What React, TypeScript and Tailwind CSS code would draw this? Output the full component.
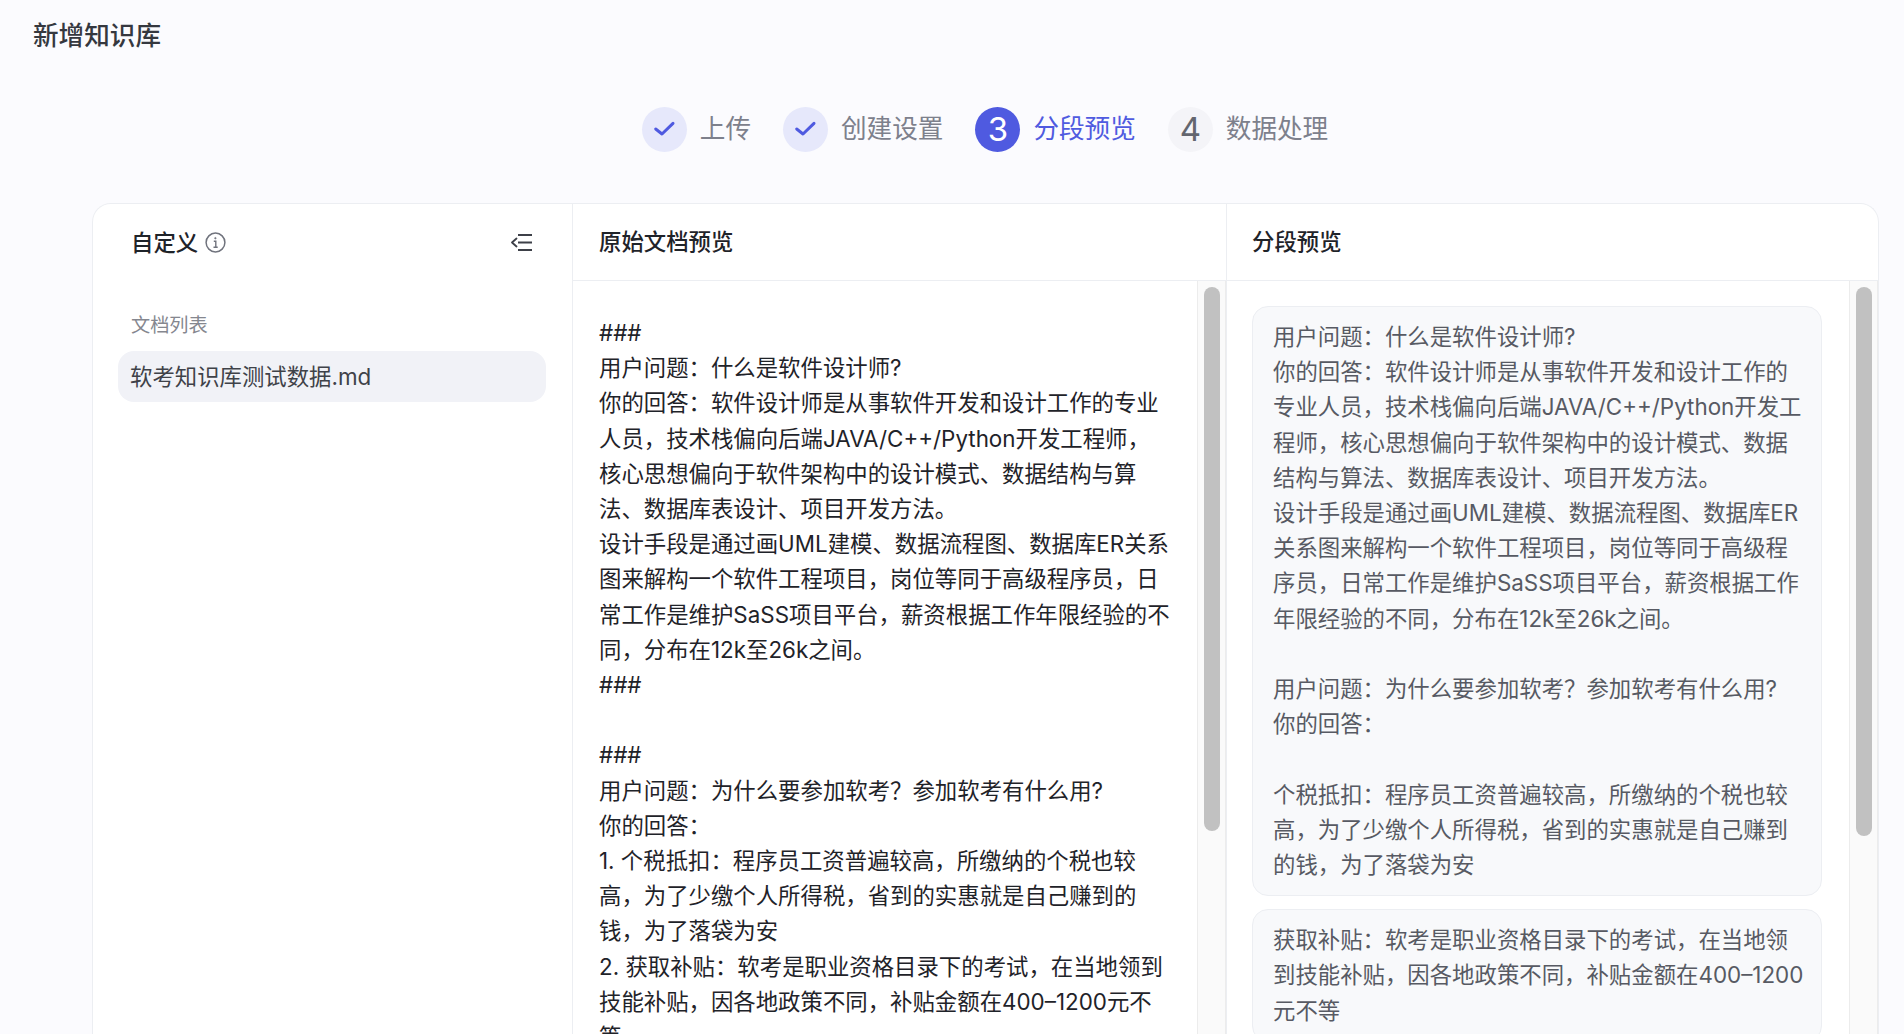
import React from 'react';

const FONT = 'font-[Inter,"Noto_Sans_CJK_SC",sans-serif]';

const steps = [
    { label: '上传', state: 'done', no: 1 },
    { label: '创建设置', state: 'done', no: 2 },
    { label: '分段预览', state: 'active', no: 3 },
    { label: '数据处理', state: 'todo', no: 4 },
];

// full-width punctuation, written as escapes
const C = '\uFF1A';
const D = '\uFF0C';
const Q = '\uFF1F';

const docLines = [
    '###',
    `用户问题${C}什么是软件设计师?`,
    `你的回答${C}软件设计师是从事软件开发和设计工作的专业人员${D}技术栈偏向后端JAVA/C++/Python开发工程师${D}核心思想偏向于软件架构中的设计模式、数据结构与算法、数据库表设计、项目开发方法。`,
    `设计手段是通过画UML建模、数据流程图、数据库ER关系图来解构一个软件工程项目${D}岗位等同于高级程序员${D}日常工作是维护SaSS项目平台${D}薪资根据工作年限经验的不同${D}分布在12k至26k之间。`,
    '###',
    '',
    '###',
    `用户问题${C}为什么要参加软考${Q}参加软考有什么用?`,
    `你的回答${C}`,
    `1. 个税抵扣${C}程序员工资普遍较高${D}所缴纳的个税也较高${D}为了少缴个人所得税${D}省到的实惠就是自己赚到的钱${D}为了落袋为安`,
    `2. 获取补贴${C}软考是职业资格目录下的考试${D}在当地领到技能补贴${D}因各地政策不同${D}补贴金额在400–1200元不等`,
];

const segments = [
    [
        `用户问题${C}什么是软件设计师?`,
        `你的回答${C}软件设计师是从事软件开发和设计工作的专业人员${D}技术栈偏向后端JAVA/C++/Python开发工程师${D}核心思想偏向于软件架构中的设计模式、数据结构与算法、数据库表设计、项目开发方法。`,
        `设计手段是通过画UML建模、数据流程图、数据库ER关系图来解构一个软件工程项目${D}岗位等同于高级程序员${D}日常工作是维护SaSS项目平台${D}薪资根据工作年限经验的不同${D}分布在12k至26k之间。`,
        '',
        `用户问题${C}为什么要参加软考${Q}参加软考有什么用?`,
        `你的回答${C}`,
        '',
        `个税抵扣${C}程序员工资普遍较高${D}所缴纳的个税也较高${D}为了少缴个人所得税${D}省到的实惠就是自己赚到的钱${D}为了落袋为安`,
    ],
    [`获取补贴${C}软考是职业资格目录下的考试${D}在当地领到技能补贴${D}因各地政策不同${D}补贴金额在400–1200元不等`],
];

const Check = () => (
    <svg width="45" height="45" viewBox="0 0 45 45" fill="none">
        <path d="M13.7 22L20 27L31 16.3" stroke="#4f5ae0" strokeWidth="3" strokeLinecap="round" strokeLinejoin="round" />
    </svg>
);

const InfoIcon = () => (
    <svg width="21" height="21" viewBox="0 0 21 21" fill="none" stroke="#70737d">
        <circle cx="10.5" cy="10.5" r="9.4" strokeWidth="1.5" />
        <path d="M8.8 9.2h2v6M8.5 15.2h4.2" strokeWidth="1.4" />
        <circle cx="10.4" cy="6.2" r="0.8" fill="#70737d" strokeWidth="0.6" />
    </svg>
);

const CollapseIcon = () => (
    <svg width="21" height="17" viewBox="0 0 21 17" fill="none" stroke="#3d4048" strokeWidth="1.8">
        <path d="M7 1h14M7 8.500h14M7 16h14" />
        <path d="M5.500 4.500L1 8.500l4.500 4" strokeLinecap="round" strokeLinejoin="round" />
    </svg>
);

const Scrollbar = ({ thumb }: { thumb: string }) => (
    <div className="w-[29px] shrink-0 border-x border-[#ececec] bg-[#fafafa] pt-[6px] pl-[6px]">
        <div className={`w-[16px] rounded-full bg-[#c1c1c1] ${thumb}`} />
    </div>
);

export default function App() {
    return (
        <div className={`flex h-screen flex-col overflow-hidden bg-[#fbfbfe] ${FONT}`}>
            <div className="flex h-[73px] shrink-0 items-center pl-[33px] text-[25.6px] font-medium text-[#35383f]">新增知识库</div>

            <div className="mt-[34px] ml-[92px] mr-[26px] flex h-[45px] shrink-0 items-center justify-center gap-[32px]">
                {steps.map(step => (
                    <div key={step.no} className="flex items-center gap-[13px]">
                        {step.state === 'done' && (
                            <div className="size-[45px] rounded-full bg-[#e6e8fb]">
                                <Check />
                            </div>
                        )}
                        {step.state === 'active' && (
                            <div className="flex size-[45px] items-center justify-center rounded-full bg-[#4f5ae0] text-[33px] text-white">
                                {step.no}
                            </div>
                        )}
                        {step.state === 'todo' && (
                            <div className="flex size-[45px] items-center justify-center rounded-full bg-[#f4f4f8] text-[33px] text-[#63666f]">
                                {step.no}
                            </div>
                        )}
                        <span className={`text-[25.6px] ${step.state === 'active' ? 'text-[#4f5ae0]' : 'text-[#7d808c]'}`}>
                            {step.label}
                        </span>
                    </div>
                ))}
            </div>

            <div className="mt-[51px] ml-[92px] mr-[25px] flex min-h-0 flex-1 overflow-hidden rounded-t-[19px] border border-b-0 border-[#eceef2] bg-white">
                <div className="w-[480px] shrink-0 border-r border-[#eceef2]">
                    <div className="flex h-[77px] items-center justify-between pr-[40px] pl-[38px]">
                        <div className="flex items-center gap-[7px]">
                            <span className="text-[22.4px] font-medium text-[#1f2329]">自定义</span>
                            <InfoIcon />
                        </div>
                        <CollapseIcon />
                    </div>
                    <div className="mt-[28px] pl-[38px] text-[19.2px] leading-[32px] text-[#85878f]">文档列表</div>
                    <div className="mt-[10px] mr-[26px] ml-[25px] flex h-[51px] items-center rounded-[16px] bg-[#f1f2f7] pl-[12px] text-[22.4px] text-[#3f4249]">
                        软考知识库测试数据.md
                    </div>
                </div>

                <div className="flex w-[654px] shrink-0 flex-col border-r border-[#eceef2]">
                    <div className="flex h-[77px] shrink-0 items-center border-b border-[#eceef2] pl-[26px] text-[22.4px] font-medium text-[#1f2329]">
                        原始文档预览
                    </div>
                    <div className="flex min-h-0 flex-1">
                        <div className="min-w-0 flex-1 overflow-hidden pt-[34px] pr-[25px] pl-[26px] text-[22.4px] leading-[35.2px] text-[#1f2329]">
                            {docLines.map((line, i) => (
                                <div key={i} className="min-h-[35.2px]">{line}</div>
                            ))}
                        </div>
                        <Scrollbar thumb="h-[544px]" />
                    </div>
                </div>

                <div className="flex min-w-0 flex-1 flex-col">
                    <div className="flex h-[77px] shrink-0 items-center border-b border-[#eceef2] pl-[25px] text-[22.4px] font-medium text-[#1f2329]">
                        分段预览
                    </div>
                    <div className="flex min-h-0 flex-1">
                        <div className="min-w-0 flex-1 overflow-hidden pt-[25px] pr-[27px] pl-[25px]">
                            {segments.map((seg, i) => (
                                <div
                                    key={i}
                                    className="mb-[13px] rounded-[16px] border border-[#eceef2] bg-[#f8f9fb] pt-[12px] pr-[14px] pb-[13px] pl-[20px] text-[22.4px] leading-[35.2px] text-[#575a63]"
                                >
                                    {seg.map((line, j) => (
                                        <div key={j} className="min-h-[35.2px]">{line}</div>
                                    ))}
                                </div>
                            ))}
                        </div>
                        <Scrollbar thumb="h-[549px]" />
                    </div>
                </div>
            </div>
        </div>
    );
}
